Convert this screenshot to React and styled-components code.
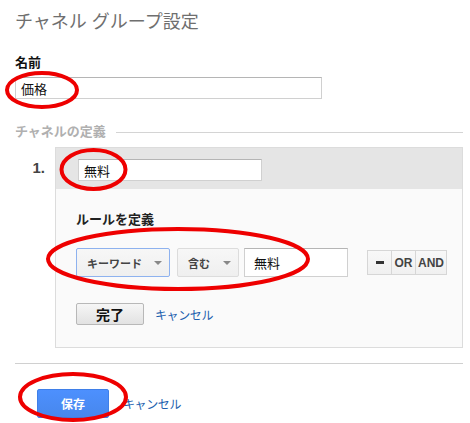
import React from "react"
import styled, { createGlobalStyle } from "styled-components"

const GlobalStyle = createGlobalStyle`
  body {
    margin: 0;
    background: #fff;
    font-family: "Liberation Sans", "Noto Sans CJK JP", sans-serif;
    color: #222;
  }
`

const Page = styled.div`
  position: relative;
  width: 470px;
  height: 423px;
  padding: 0 7px 0 15px;
  box-sizing: border-box;
  overflow: hidden;
`

const Title = styled.h1`
  margin: 0;
  padding-top: 10px;
  font-size: 18px;
  line-height: 24px;
  font-weight: normal;
  color: #6f6f6f;
`

const Label = styled.div`
  margin-top: 20px;
  font-size: 13px;
  line-height: 18px;
  font-weight: bold;
  color: #111;
`

const TextInput = styled.div`
  box-sizing: border-box;
  flex-shrink: 0;
  width: ${p => p.width}px;
  height: ${p => p.height || 22}px;
  margin-top: ${p => p.mt || 0}px;
  padding: 0 ${p => p.pad || 5}px;
  display: flex;
  align-items: center;
  background: #fff;
  border: 1px solid #d0d0d0;
  border-top-color: #b5b5b5;
  font-size: 13px;
  color: #111;
`

const Legend = styled.div`
  display: flex;
  align-items: center;
  margin-top: 24px;
  font-size: 13px;
  line-height: 18px;
  font-weight: bold;
  color: #b0b0b0;

  &::after {
    content: "";
    flex: 1;
    height: 1px;
    margin-left: 10px;
    background: #d4d4d4;
  }
`

const RuleRow = styled.div`
  display: flex;
  margin-top: 6px;
`

const Num = styled.div`
  flex-shrink: 0;
  width: 40px;
  padding: 12px 10px 0 0;
  box-sizing: border-box;
  text-align: right;
  font-size: 15px;
  font-weight: bold;
  color: #444;
`

const Box = styled.div`
  flex: 1;
  min-width: 0;
  border: 1px solid #dcdcdc;
  background: #fafafa;
`

const BoxHead = styled.div`
  height: 41px;
  padding: 11px 22px 0;
  box-sizing: border-box;
  background: #e5e5e5;
`

const BoxBody = styled.div`
  padding: 22px 10px 22px 20px;
`

const SubTitle = styled.div`
  font-size: 13px;
  line-height: 18px;
  font-weight: bold;
  color: #222;
`

const Controls = styled.div`
  display: flex;
  align-items: center;
  margin-top: 19px;
`

const Select = styled.div`
  box-sizing: border-box;
  flex-shrink: 0;
  width: ${p => p.width}px;
  height: 29px;
  margin-right: ${p => p.gap}px;
  padding: 0 7px 0 10px;
  display: flex;
  align-items: center;
  justify-content: space-between;
  border: 1px solid ${p => (p.focused ? "#8eb2ef" : "#dcdcdc")};
  border-radius: 2px;
  background: linear-gradient(#f7f7f7, #efefef);
  font-size: 11px;
  font-weight: bold;
  color: #444;

  &::after {
    content: "";
    border-left: 4px solid transparent;
    border-right: 4px solid transparent;
    border-top: 4px solid #888;
  }
`

const ButtonGroup = styled.div`
  display: flex;
  flex-shrink: 0;
  margin-left: 20px;
`

const GroupButton = styled.div`
  box-sizing: border-box;
  width: ${p => p.width}px;
  height: 25px;
  display: flex;
  align-items: center;
  justify-content: center;
  border: 1px solid #d6d6d6;
  margin-left: -1px;
  background: linear-gradient(#f8f8f8, #f0f0f0);
  font-family: "Liberation Sans", sans-serif;
  font-size: 12px;
  font-weight: bold;
  color: #444;
`

const Dash = styled.span`
  width: 8px;
  height: 3px;
  background: #333;
`

const Actions = styled.div`
  display: flex;
  align-items: center;
  margin-top: ${p => p.mt}px;
  padding-left: ${p => p.indent || 0}px;
`

const GrayButton = styled.div`
  box-sizing: border-box;
  width: 68px;
  height: 22px;
  display: flex;
  align-items: center;
  justify-content: center;
  border: 1px solid #b8b8b8;
  border-radius: 2px;
  background: linear-gradient(#f6f6f6, #e2e2e2);
  font-size: 14px;
  font-weight: bold;
  color: #111;
`

const BlueButton = styled.div`
  box-sizing: border-box;
  width: 72px;
  height: 29px;
  display: flex;
  align-items: center;
  justify-content: center;
  border: 1px solid #3f7fe8;
  border-radius: 2px;
  background: linear-gradient(#4d90fe, #4787ed);
  font-size: 12px;
  font-weight: bold;
  color: #fff;
`

const CancelLink = styled.a`
  margin-left: ${p => p.ml}px;
  font-size: 12px;
  letter-spacing: -0.4px;
  color: #1c5fae;
  text-decoration: none;
`

const Separator = styled.div`
  height: 1px;
  margin-top: 15px;
  background: #d0d0d0;
`

const Marks = styled.svg`
  position: absolute;
  left: 0;
  top: 0;
  pointer-events: none;
`

const rings = [
  { cx: 42, cy: 90, rx: 35, ry: 17 },
  { cx: 93.5, cy: 169.5, rx: 32, ry: 19.5 },
  { cx: 178, cy: 259, rx: 130, ry: 30 },
  { cx: 73, cy: 397, rx: 53, ry: 23 },
]

export default function App() {
  return (
    <Page>
      <GlobalStyle />
      <Title>チャネル グループ設定</Title>
      <Label>名前</Label>
      <TextInput width={307} mt={5}>価格</TextInput>

      <Legend>チャネルの定義</Legend>

      <RuleRow>
        <Num>1.</Num>
        <Box>
          <BoxHead>
            <TextInput width={184}>無料</TextInput>
          </BoxHead>
          <BoxBody>
            <SubTitle>ルールを定義</SubTitle>
            <Controls>
              <Select width={94} gap={7} focused>キーワード</Select>
              <Select width={62} gap={5}>含む</Select>
              <TextInput width={104} height={29} pad={9}>無料</TextInput>
              <ButtonGroup>
                <GroupButton width={25}><Dash /></GroupButton>
                <GroupButton width={25}>OR</GroupButton>
                <GroupButton width={32}>AND</GroupButton>
              </ButtonGroup>
            </Controls>
            <Actions mt={26}>
              <GrayButton>完了</GrayButton>
              <CancelLink ml={11}>キャンセル</CancelLink>
            </Actions>
          </BoxBody>
        </Box>
      </RuleRow>

      <Separator />

      <Actions mt={25} indent={22}>
        <BlueButton>保存</BlueButton>
        <CancelLink ml={14}>キャンセル</CancelLink>
      </Actions>

      <Marks width="470" height="423">
        {rings.map((r, i) => (
          <ellipse key={i} {...r} fill="none" stroke="#ee0000" strokeWidth="4" />
        ))}
      </Marks>
    </Page>
  )
}
